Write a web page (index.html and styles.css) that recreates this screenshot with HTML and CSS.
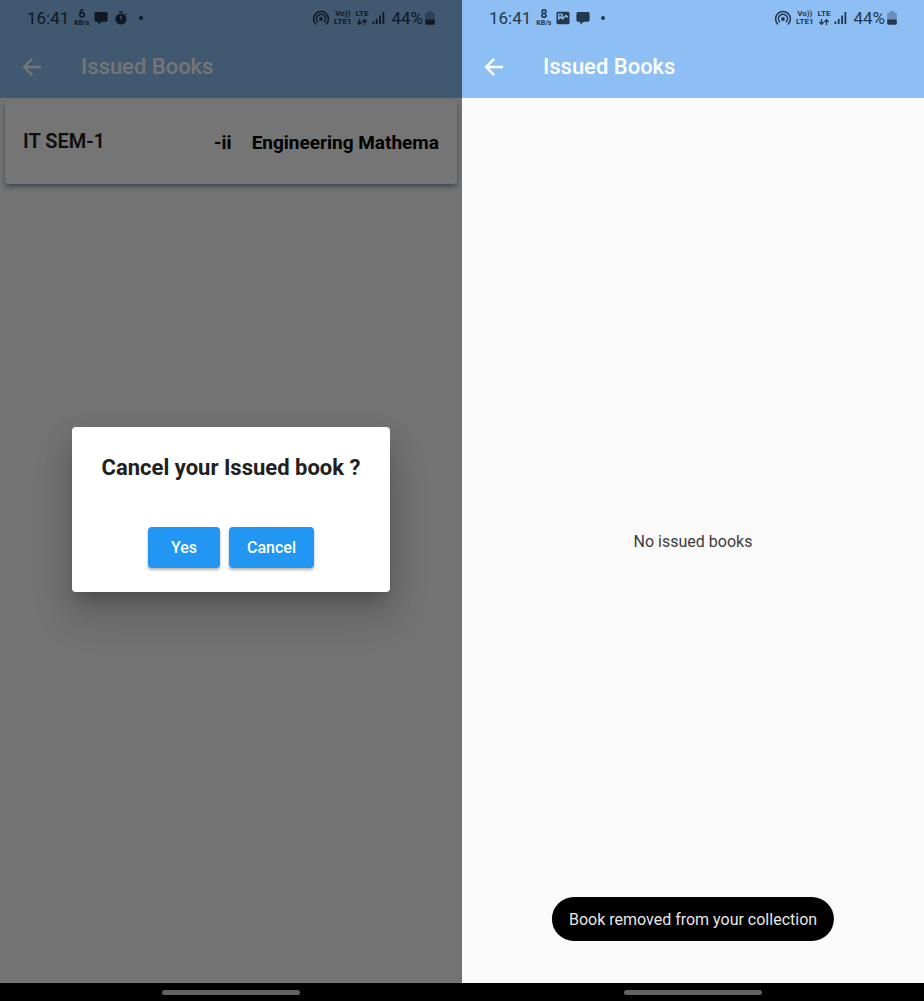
FILE: index.html
```html
<!DOCTYPE html>
<html lang="en">
<head>
<meta charset="utf-8">
<meta name="viewport" content="width=device-width, initial-scale=1">
<title>Issued Books</title>
<link rel="stylesheet" href="styles.css">
</head>
<body>
<svg class="defs" aria-hidden="true">
  <symbol id="chat" viewBox="0 0 14 14"><path d="M2 1h10a1.600 1.600 0 0 1 1.600 1.600v6.500a1.600 1.600 0 0 1-1.600 1.600H8L4.200 13.500v-2.800H2A1.600 1.600 0 0 1 .4 9.100V2.600A1.600 1.600 0 0 1 2 1z" fill="currentColor"/></symbol>
  <symbol id="timer" viewBox="0 0 14 14"><path fill-rule="evenodd" d="M5 .3h4v1.500H5zM11.500 2l1.300 1.300-1 1-1.300-1.300zM7 2.400a5.600 5.600 0 1 1 0 11.200A5.600 5.600 0 0 1 7 2.400zm-.7 2.400v3.700h1.400V4.800z" fill="currentColor"/></symbol>
  <symbol id="picture" viewBox="0 0 14 14"><path fill-rule="evenodd" d="M2 .8h10A1.500 1.500 0 0 1 13.500 2.300v9.400a1.500 1.500 0 0 1-1.500 1.500H2a1.500 1.500 0 0 1-1.500-1.500V2.300A1.500 1.500 0 0 1 2 .8zM2 9.500l2.500-2.500 2.200 1.800L10 5.500l2 1.800V5.600l-2-2-3.300 3.200V2.500H2zM3.200 3.500h2v2h-2z" fill="currentColor"/></symbol>
  <symbol id="hotspot" viewBox="0 0 18 16"><g fill="none" stroke="currentColor" stroke-width="1.500" stroke-linecap="round"><path d="M3.600 14A7.400 7.400 0 1 1 14.400 14"/><path d="M5.600 11.800a4.500 4.500 0 1 1 6.800 0"/></g><circle cx="9" cy="9" r="1.900" fill="currentColor"/></symbol>
  <symbol id="arrows" viewBox="0 0 12 7"><path d="M3.500 .5v5M1.300 3.500l2.200 2.300 2.200-2.300M8.500 6.500v-5M6.300 3.500l2.200-2.300 2.200 2.300" fill="none" stroke="currentColor" stroke-width="1.300"/></symbol>
  <symbol id="signal" viewBox="0 0 13 13"><path d="M.5 10.500h1.800V13H.5zM3.800 8h1.800v5H3.800zM7.200 4.500H9V13H7.200zM10.500 1h1.800v12h-1.800z" fill="currentColor"/></symbol>
  <symbol id="battery" viewBox="0 0 10 14"><path d="M3 0h4v1.500h1.500A1.300 1.300 0 0 1 9.800 2.800V9H.2V2.800a1.300 1.300 0 0 1 1.300-1.300H3z" fill="currentColor" opacity=".35"/><path d="M.2 8.500h9.600v4a1.300 1.300 0 0 1-1.300 1.300h-7A1.300 1.300 0 0 1 .2 12.500z" fill="currentColor"/></symbol>
  <symbol id="back" viewBox="0 0 20 20"><path d="M19 10H2.500M10.200 1.900L2.100 10l8.100 8.100" fill="none" stroke="currentColor" stroke-width="2.400"/></symbol>
</svg>
<main class="screens">
  <section class="phone">
    <div class="app">
      <header class="top">
        <div class="status">
          <span class="clock">16:41</span>
          <span class="rate"><b>6</b><small>KB/s</small></span>
          <svg class="note"><use href="#chat"/></svg>
          <svg class="note"><use href="#timer"/></svg>
          <i class="dot"></i>
          <svg class="hotspot"><use href="#hotspot"/></svg>
          <span class="net"><span>Vo))</span><span>LTE1</span></span>
          <span class="net"><span>LTE</span><svg class="arrows"><use href="#arrows"/></svg></span>
          <svg class="signal"><use href="#signal"/></svg>
          <span class="percent">44%</span>
          <svg class="battery"><use href="#battery"/></svg>
        </div>
        <div class="bar">
          <button class="back" aria-label="Back"><svg><use href="#back"/></svg></button>
          <h1>Issued Books</h1>
        </div>
      </header>
      <div class="list">
        <article class="card">
          <h2>IT SEM-1</h2>
          <p class="book"><span>-ii</span><span>Engineering Mathema</span></p>
        </article>
      </div>
      <div class="scrim">
        <div class="dialog" role="dialog" aria-labelledby="ask">
          <h2 id="ask">Cancel your Issued book ?</h2>
          <div class="actions">
            <button class="action">Yes</button>
            <button class="action">Cancel</button>
          </div>
        </div>
      </div>
    </div>
    <div class="nav"><i></i></div>
  </section>
  <section class="phone">
    <div class="app">
      <header class="top">
        <div class="status">
          <span class="clock">16:41</span>
          <span class="rate"><b>8</b><small>KB/s</small></span>
          <svg class="note"><use href="#picture"/></svg>
          <svg class="note"><use href="#chat"/></svg>
          <i class="dot"></i>
          <svg class="hotspot"><use href="#hotspot"/></svg>
          <span class="net"><span>Vo))</span><span>LTE1</span></span>
          <span class="net"><span>LTE</span><svg class="arrows"><use href="#arrows"/></svg></span>
          <svg class="signal"><use href="#signal"/></svg>
          <span class="percent">44%</span>
          <svg class="battery"><use href="#battery"/></svg>
        </div>
        <div class="bar">
          <button class="back" aria-label="Back"><svg><use href="#back"/></svg></button>
          <h1>Issued Books</h1>
        </div>
      </header>
      <p class="empty">No issued books</p>
      <div class="toast" role="status">Book removed from your collection</div>
    </div>
    <div class="nav"><i></i></div>
  </section>
</main>
</body>
</html>
```
FILE: styles.css
```css
* { box-sizing: border-box; }
body { margin: 0; font-family: Roboto, "Liberation Sans", sans-serif; font-size: 16px; }
h1, h2, p { margin: 0; }
button { border: 0; font: inherit; cursor: pointer; }
svg { display: block; flex: none; }
.defs { position: absolute; width: 0; height: 0; }

.screens { display: grid; grid-template-columns: 1fr 1fr; min-height: 100vh; }
.phone { display: flex; flex-direction: column; min-width: 0; }
.app { position: relative; flex: 1; display: flex; flex-direction: column; background: #fafafa; }

.top { background: #8dbff5; }
.status { display: flex; align-items: center; height: 35px; padding: 0 27px; color: #24384c; }
.clock, .percent { font-size: 17px; line-height: 20px; }
.rate { display: flex; flex-direction: column; align-items: center; margin: 0 5px; }
.rate b { font-size: 12px; line-height: 11px; }
.rate small { font-size: 7px; font-weight: 700; line-height: 6px; }
.note { width: 14px; height: 14px; margin-right: 6px; }
.dot { width: 4px; height: 4px; margin: 0 auto 0 5px; border-radius: 50%; background: currentColor; }
.hotspot { width: 18px; height: 16px; margin-right: 4px; }
.net { display: flex; flex-direction: column; align-items: center; margin-right: 4px; font-size: 8px; font-weight: 700; line-height: 8px; }
.arrows { width: 12px; height: 8px; }
.signal { width: 13px; height: 13px; margin-right: 6px; }
.percent { margin-right: 2px; }
.battery { width: 10px; height: 14px; }

.bar { display: flex; align-items: center; gap: 39px; height: 63px; padding: 1px 22px 0; color: #fff; }
.back { padding: 0; background: none; color: inherit; }
.back svg { width: 20px; height: 20px; }
.bar h1 { font-size: 22px; font-weight: 500; line-height: 28px; }

.list { padding: 2px 5px; }
.card { display: flex; justify-content: space-between; align-items: flex-start; padding: 29px 18px 27px; border-radius: 4px; background: #fff; box-shadow: 0 3px 5px #8aa0b4; white-space: nowrap; }
.card h2 { font-size: 20px; font-weight: 600; line-height: 24px; color: #212121; }
.book { display: flex; gap: 20px; font-size: 19px; font-weight: 700; line-height: 28px; }

.scrim { position: absolute; inset: 0; display: flex; align-items: center; justify-content: center; padding-top: 36px; background: rgba(0, 0, 0, .54); }
.dialog { padding: 27px 30px 24px; border-radius: 4px; background: #fff; text-align: center; box-shadow: 0 11px 15px -7px rgba(0, 0, 0, .2), 0 24px 38px 3px rgba(0, 0, 0, .14), 0 9px 30px 2px rgba(0, 0, 0, .08); }
.dialog h2 { font-size: 22px; font-weight: 700; line-height: 28px; color: #212121; }
.actions { display: flex; justify-content: center; gap: 9px; margin-top: 45px; }
.action { min-width: 72px; height: 41px; padding: 0 18px; border-radius: 4px; background: #2196f3; color: #fff; font-weight: 500; box-shadow: 0 2px 3px rgba(0, 0, 0, .3); }

.empty { flex: 1; display: flex; align-items: center; justify-content: center; padding-top: 2px; color: #3c3c3c; }
.toast { position: absolute; bottom: 42px; left: 50%; transform: translateX(-50%); padding: 13px 17px 11px; border-radius: 22px; background: #000; color: #e6e6e6; line-height: 20px; white-space: nowrap; }

.nav { display: flex; align-items: center; justify-content: center; height: 18px; background: #000; }
.nav i { width: 30%; height: 5px; border-radius: 3px; background: #626262; }
```
